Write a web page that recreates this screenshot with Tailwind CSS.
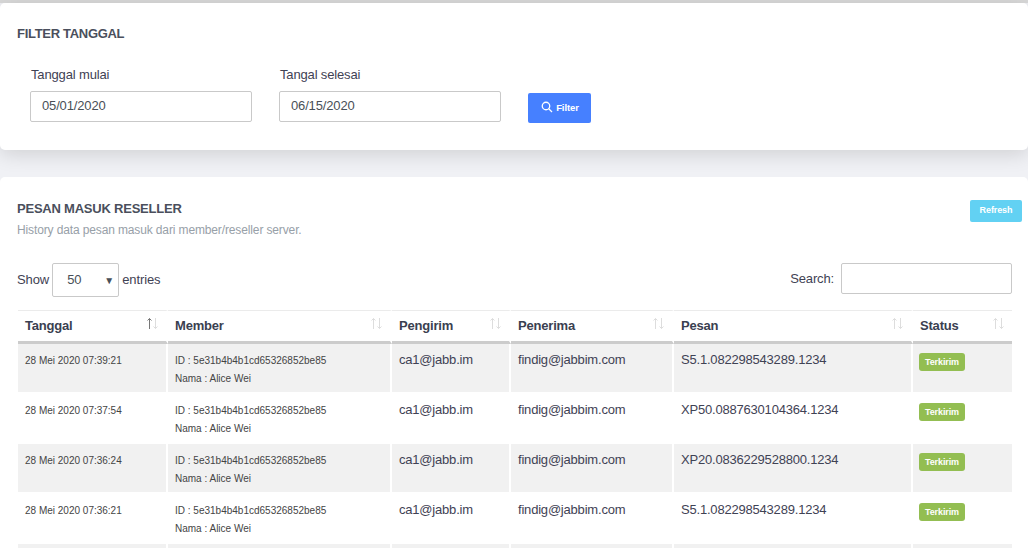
<!DOCTYPE html>
<html lang="id">
<head>
    <meta charset="UTF-8">
    <title>Pesan Masuk Reseller</title>
    <script src="https://cdn.jsdelivr.net/npm/@tailwindcss/browser@4"></script>
</head>
<body class="h-[548px] overflow-hidden bg-[#f0f1f5] font-['Liberation_Sans',Arial,sans-serif] text-[#3f4254]">
    <div class="h-[3px] bg-[#d9d9d9]"></div>

    <!-- Filter -->
    <div class="h-[147px] rounded-[5px] bg-white pl-[17px] pt-[23px] shadow-[0_4px_20px_rgba(0,0,0,0.14)]">
        <h2 class="text-[13px] leading-[15px] font-bold tracking-[-0.3px] text-[#4a4f5c]">FILTER TANGGAL</h2>
        <div class="mt-[24px] flex items-start pl-[13px]">
            <div class="w-[222px]">
                <label class="block pl-[1px] text-[13px] leading-[20px] tracking-[-0.15px] text-[#3f4254]">Tanggal mulai</label>
                <input type="text" value="05/01/2020" class="mt-[6px] h-[31px] w-full rounded-[2px] border border-[#c9c9c9] px-[11px] pb-[2px] text-[13px] tracking-[-0.15px] text-[#495057]">
            </div>
            <div class="ml-[27px] w-[222px]">
                <label class="block pl-[1px] text-[13px] leading-[20px] tracking-[-0.15px] text-[#3f4254]">Tangal selesai</label>
                <input type="text" value="06/15/2020" class="mt-[6px] h-[31px] w-full rounded-[2px] border border-[#c9c9c9] px-[11px] pb-[2px] text-[13px] tracking-[-0.15px] text-[#495057]">
            </div>
            <button class="mt-[28px] ml-[27px] flex h-[30px] w-[63px] items-center justify-center gap-[3px] rounded-[2px] bg-[#4680ff] pl-[1px] text-[9.5px] font-bold tracking-[-0.1px] text-white">
                <svg class="mt-[-2px] h-[12px] w-[12px]" viewBox="0 0 24 24" fill="none" stroke="currentColor" stroke-width="2.6"><circle cx="10" cy="10" r="7.5"/><path d="M15.5 15.5 22 22"/></svg>
                Filter
            </button>
        </div>
    </div>

    <!-- Pesan masuk -->
    <div class="mt-[27px] h-[400px] rounded-[5px] bg-white px-[17px] pt-[24px]">
        <div class="flex items-start justify-between">
            <div>
                <h2 class="text-[13px] leading-[15px] font-bold tracking-[-0.22px] text-[#4a4f5c]">PESAN MASUK RESELLER</h2>
                <p class="mt-[7px] text-[12px] leading-[14px] tracking-[-0.13px] text-[#97a0a8]">History data pesan masuk dari member/reseller server.</p>
            </div>
            <button class="mt-[-1px] mr-[-11px] h-[22px] w-[52px] rounded-[2px] bg-[#62d1f3] text-[9px] font-bold tracking-[-0.1px] text-white">Refresh</button>
        </div>

        <div class="mt-[26px] flex items-start justify-between">
            <div class="flex h-[34px] items-center text-[13px] tracking-[-0.1px]">
                Show
                <div class="mx-[3px] flex h-[34px] w-[67px] items-center justify-between rounded-[2px] border border-[#c9c9c9] pr-[4px] pl-[14px] text-[13px] text-[#495057]">50 <span class="text-[10px]">▼</span></div>
                entries
            </div>
            <div class="mr-[-1px] flex items-center gap-[7px] text-[13px] tracking-[-0.15px]">
                Search:
                <input type="text" class="h-[31px] w-[171px] rounded-[2px] border border-[#c9c9c9]">
            </div>
        </div>

        <table class="mt-[13px] ml-[1px] w-[994px] table-fixed border-separate border-spacing-0 text-left">
            <colgroup>
                <col class="w-[150px]"><col class="w-[224px]"><col class="w-[119px]"><col class="w-[163px]"><col class="w-[239px]"><col class="w-[99px]">
            </colgroup>
            <thead class="text-[13px] font-bold tracking-[-0.2px] text-[#3a4050]">
                <tr id="headRow"></tr>
            </thead>
            <tbody id="tableBody"></tbody>
        </table>
    </div>

    <script>
        const headers = ['Tanggal', 'Member', 'Pengirim', 'Penerima', 'Pesan', 'Status'];
        const rows = [
            ['28 Mei 2020 07:39:21', 'S5.1.082298543289.1234'],
            ['28 Mei 2020 07:37:54', 'XP50.0887630104364.1234'],
            ['28 Mei 2020 07:36:24', 'XP20.0836229528800.1234'],
            ['28 Mei 2020 07:36:21', 'S5.1.082298543289.1234'],
            ['', '']
        ];

        document.getElementById('headRow').innerHTML = headers.map((title, i) => `
            <th class="relative h-[34px] border-t border-r-2 border-b-[3px] border-t-[#ebebeb] border-r-white border-b-[#cccccc] pl-[7px] last:border-r-0">
                ${title}
                <svg class="absolute top-[6px] right-[7px] h-[13px] w-[13px]" viewBox="0 0 13 13" fill="none" stroke-width="1">
                    <path d="M3.5 12V1.5M1.5 3.5l2-2 2 2" stroke="${i === 0 ? '#777777' : '#dddddd'}"/>
                    <path d="M9.5 1v10.5M7.5 9.5l2 2 2-2" stroke="#dddddd"/>
                </svg>
            </th>`).join('');

        document.getElementById('tableBody').innerHTML = rows.map(([date, pesan], i) => {
            const bg = i % 2 === 0 ? 'bg-[#f1f1f1]' : 'bg-white';
            const cell = `${bg} h-[50px] border-r-2 border-b-2 border-white pl-[7px] align-top last:border-r-0`;
            if (!date) return `<tr>${headers.map(() => `<td class="${cell}"></td>`).join('')}</tr>`;
            return `<tr>
                <td class="${cell} pt-[10px] text-[10px] leading-[14px] text-[#444]">${date}</td>
                <td class="${cell} pt-[8px] text-[10px] leading-[18px] text-[#444]">ID : 5e31b4b4b1cd65326852be85<br>Nama : Alice Wei</td>
                <td class="${cell} pt-[8px] text-[13px] leading-[16px] tracking-[-0.2px]">ca1@jabb.im</td>
                <td class="${cell} pt-[8px] text-[13px] leading-[16px] tracking-[-0.2px]">findig@jabbim.com</td>
                <td class="${cell} pt-[8px] text-[13px] leading-[16px] tracking-[-0.2px]">${pesan}</td>
                <td class="${cell} pt-[9px]"><span class="ml-[-1px] block h-[18px] w-[46px] rounded-[3px] bg-[#93be52] text-center text-[9px] leading-[18px] font-bold tracking-[-0.1px] text-white">Terkirim</span></td>
            </tr>`;
        }).join('');
    </script>
</body>
</html>
